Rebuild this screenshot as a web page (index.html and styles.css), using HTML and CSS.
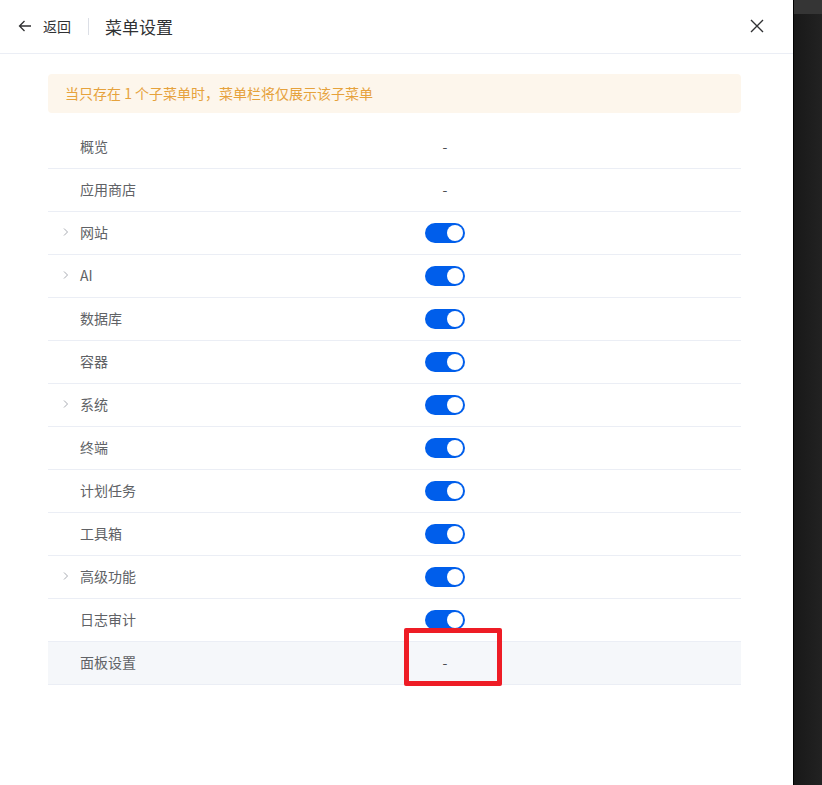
FILE: index.html
```html
<!DOCTYPE html>
<html lang="zh">
<head>
<meta charset="utf-8">
<link rel="stylesheet" href="styles.css">
</head>
<body>
<div class="page">
  <div class="panel">
    <div class="header">
      <div class="back">
        <svg class="back-icon" width="14" height="14" viewBox="0 0 14 14"><path d="M13 7H1.5M6.5 2L1.5 7l5 5" fill="none" stroke="#303133" stroke-width="1.3"/></svg>
        <span>返回</span>
      </div>
      <div class="divider"></div>
      <div class="title">菜单设置</div>
      <svg class="close" width="14" height="14" viewBox="0 0 14 14"><path d="M1 1l12 12M13 1L1 13" stroke="#303133" stroke-width="1.4"/></svg>
    </div>
    <div class="content">
      <div class="alert">当只存在 1 个子菜单时，菜单栏将仅展示该子菜单</div>
      <div class="table">
        <div class="row"><div class="label"><span class="chev"></span>概览</div><div class="val"><span class="dash">-</span></div><div></div></div>
        <div class="row"><div class="label"><span class="chev"></span>应用商店</div><div class="val"><span class="dash">-</span></div><div></div></div>
        <div class="row"><div class="label"><span class="chev"><svg width="8" height="10" viewBox="0 0 8 10"><path d="M2 1.5L5.5 5 2 8.5" fill="none" stroke="#a8abb2" stroke-width="1"/></svg></span>网站</div><div class="val"><span class="switch"></span></div><div></div></div>
        <div class="row"><div class="label"><span class="chev"><svg width="8" height="10" viewBox="0 0 8 10"><path d="M2 1.5L5.5 5 2 8.5" fill="none" stroke="#a8abb2" stroke-width="1"/></svg></span>AI</div><div class="val"><span class="switch"></span></div><div></div></div>
        <div class="row"><div class="label"><span class="chev"></span>数据库</div><div class="val"><span class="switch"></span></div><div></div></div>
        <div class="row"><div class="label"><span class="chev"></span>容器</div><div class="val"><span class="switch"></span></div><div></div></div>
        <div class="row"><div class="label"><span class="chev"><svg width="8" height="10" viewBox="0 0 8 10"><path d="M2 1.5L5.5 5 2 8.5" fill="none" stroke="#a8abb2" stroke-width="1"/></svg></span>系统</div><div class="val"><span class="switch"></span></div><div></div></div>
        <div class="row"><div class="label"><span class="chev"></span>终端</div><div class="val"><span class="switch"></span></div><div></div></div>
        <div class="row"><div class="label"><span class="chev"></span>计划任务</div><div class="val"><span class="switch"></span></div><div></div></div>
        <div class="row"><div class="label"><span class="chev"></span>工具箱</div><div class="val"><span class="switch"></span></div><div></div></div>
        <div class="row"><div class="label"><span class="chev"><svg width="8" height="10" viewBox="0 0 8 10"><path d="M2 1.5L5.5 5 2 8.5" fill="none" stroke="#a8abb2" stroke-width="1"/></svg></span>高级功能</div><div class="val"><span class="switch"></span></div><div></div></div>
        <div class="row"><div class="label"><span class="chev"></span>日志审计</div><div class="val"><span class="switch"></span></div><div></div></div>
        <div class="row hover"><div class="label"><span class="chev"></span>面板设置</div><div class="val"><span class="dash">-</span></div><div></div></div>
      </div>
    </div>
  </div>
  <div class="side"><div class="side-top"></div></div>
</div>
<div class="mark"></div>
</body>
</html>
```
FILE: styles.css
```css
html, body {
  margin: 0;
  padding: 0;
  height: 100%;
}
body {
  font-family: "Noto Sans CJK SC", "Inter", "Liberation Sans", sans-serif;
  color: #606266;
  font-size: 14px;
  position: relative;
}
.page {
  display: flex;
  height: 785px;
  width: 822px;
}
.panel {
  width: 793px;
  background: #fff;
  display: flex;
  flex-direction: column;
}
.side {
  flex: 1;
  background: linear-gradient(90deg, #181818, #222);
  border-left: 1px solid #000;
}
.side-top {
  height: 14px;
  background: #353535;
}
.header {
  height: 54px;
  box-sizing: border-box;
  border-bottom: 1px solid #ebeef5;
  display: flex;
  align-items: center;
  padding: 0 29px 1px 18px;
}
.back {
  display: flex;
  align-items: center;
  gap: 11px;
  color: #303133;
  font-size: 14px;
}
.divider {
  width: 1px;
  height: 17px;
  background: #dcdfe6;
  margin: 0 16px 0 17px;
}
.title {
  font-size: 17px;
  color: #303133;
  flex: 1;
}
.close {
  display: block;
}
.content {
  padding: 20px 52px 0 48px;
}
.alert {
  height: 39px;
  background: #fdf6ec;
  color: #e6a23c;
  border-radius: 4px;
  display: flex;
  align-items: center;
  padding-left: 17px;
  padding-bottom: 1px;
  box-sizing: border-box;
  font-size: 14px;
}
.table {
  margin-top: 13px;
}
.row {
  display: grid;
  grid-template-columns: 346px 102px 1fr;
  height: 43px;
  box-sizing: border-box;
  border-bottom: 1px solid #ebeef5;
  align-items: center;
}
.row.hover {
  background: #f5f7fa;
}
.label {
  display: flex;
  align-items: center;
  padding-left: 14px;
  padding-bottom: 2px;
}
.chev {
  width: 18px;
  display: flex;
  align-items: center;
}
.val {
  display: flex;
  justify-content: center;
  align-items: center;
}
.dash {
  color: #4c4e52;
  padding-bottom: 2px;
}
.switch {
  width: 40px;
  height: 20px;
  border-radius: 10px;
  background: #005eeb;
  position: relative;
  display: block;
}
.switch::after {
  content: "";
  position: absolute;
  right: 2px;
  top: 2px;
  width: 16px;
  height: 16px;
  border-radius: 50%;
  background: #fff;
}
.mark {
  position: absolute;
  left: 404px;
  top: 628px;
  width: 98px;
  height: 58px;
  box-sizing: border-box;
  border: 5px solid #ee1c25;
  border-radius: 2px;
}
```
